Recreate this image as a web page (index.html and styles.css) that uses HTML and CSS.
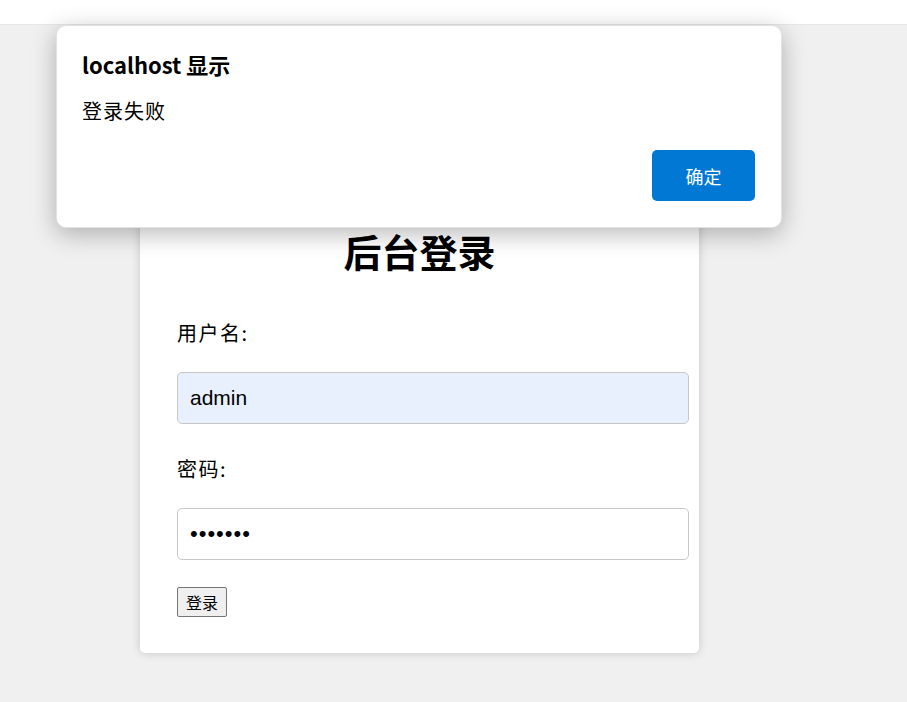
FILE: index.html
```html
<!DOCTYPE html>
<html lang="zh">
<head>
<meta charset="utf-8">
<title>后台登录</title>
<link rel="stylesheet" href="styles.css">
</head>
<body>
<div class="topbar"></div>
<main class="page">
  <form class="card">
    <h1 class="title">后台登录</h1>
    <label class="label" for="u">用户名:</label>
    <input class="field field-filled" id="u" type="text" value="admin">
    <label class="label" for="p">密码:</label>
    <input class="field field-pass" id="p" type="password" value="1234567">
    <button class="submit" type="button">登录</button>
  </form>
</main>
<div class="dialog">
  <div class="dialog-title">localhost 显示</div>
  <div class="dialog-msg">登录失败</div>
  <div class="dialog-actions">
    <button class="dialog-ok" type="button">确定</button>
  </div>
</div>
</body>
</html>
```
FILE: styles.css
```css
html, body {
  margin: 0;
  padding: 0;
}
body {
  background: #f0f0f0;
  font-family: "Noto Sans CJK SC", "Noto Sans", sans-serif;
  color: #000;
  height: 702px;
  overflow: hidden;
}
.topbar {
  height: 24px;
  background: #fff;
  border-bottom: 1px solid #e6e6e6;
}
.page {
  padding: 161px 0 0 140px;
}
.card {
  width: 559px;
  box-sizing: border-box;
  background: #fff;
  border-radius: 5px;
  box-shadow: 0 0 10px rgba(0,0,0,0.18);
  padding: 40px 0 36px 37px;
  display: flex;
  flex-direction: column;
  align-items: flex-start;
}
.title {
  align-self: stretch;
  margin: 0 0 0 -37px;
  text-align: center;
  font-size: 38px;
  line-height: 50px;
  font-weight: 700;
}
.label {
  margin-top: 43px;
  font-size: 20px;
  line-height: 28px;
  letter-spacing: 1.5px;
}
.label + .field {
  margin-top: 25px;
}
.field + .label {
  margin-top: 31px;
}
.field {
  width: 512px;
  height: 52px;
  box-sizing: border-box;
  border: 1px solid #c8c8c8;
  border-radius: 5px;
  padding: 0 12px;
  font-family: "Liberation Sans", Arial, sans-serif;
  font-size: 21px;
  background: #fff;
  color: #000;
}
.field-pass {
  font-size: 22px;
  letter-spacing: 1px;
}
.field-filled {
  background: #e8f0fe;
}
.submit {
  margin-top: 27px;
  width: 50px;
  height: 30px;
  padding: 0;
  border: 1px solid #767676;
  border-radius: 2px;
  background: #efefef;
  font-family: "Noto Sans CJK SC", sans-serif;
  font-size: 16px;
  color: #000;
}
.dialog {
  position: absolute;
  left: 56px;
  top: 25px;
  width: 726px;
  height: 203px;
  box-sizing: border-box;
  background: #fff;
  border: 1px solid #e2e2e2;
  border-radius: 10px;
  box-shadow: 0 6px 24px rgba(0,0,0,0.28);
  padding: 24px 26px 0 25px;
  display: flex;
  flex-direction: column;
}
.dialog-title {
  font-family: "Noto Sans CJK SC", sans-serif;
  font-weight: 700;
  font-size: 22px;
  line-height: 28px;
}
.dialog-msg {
  margin-top: 19px;
  font-size: 20px;
  line-height: 28px;
  letter-spacing: 1px;
}
.dialog-actions {
  margin-top: 25px;
  display: flex;
  justify-content: flex-end;
}
.dialog-ok {
  width: 103px;
  height: 51px;
  border: none;
  border-radius: 5px;
  background: #0078d4;
  color: #fff;
  font-family: "Noto Sans CJK SC", sans-serif;
  font-size: 18px;
}
```
